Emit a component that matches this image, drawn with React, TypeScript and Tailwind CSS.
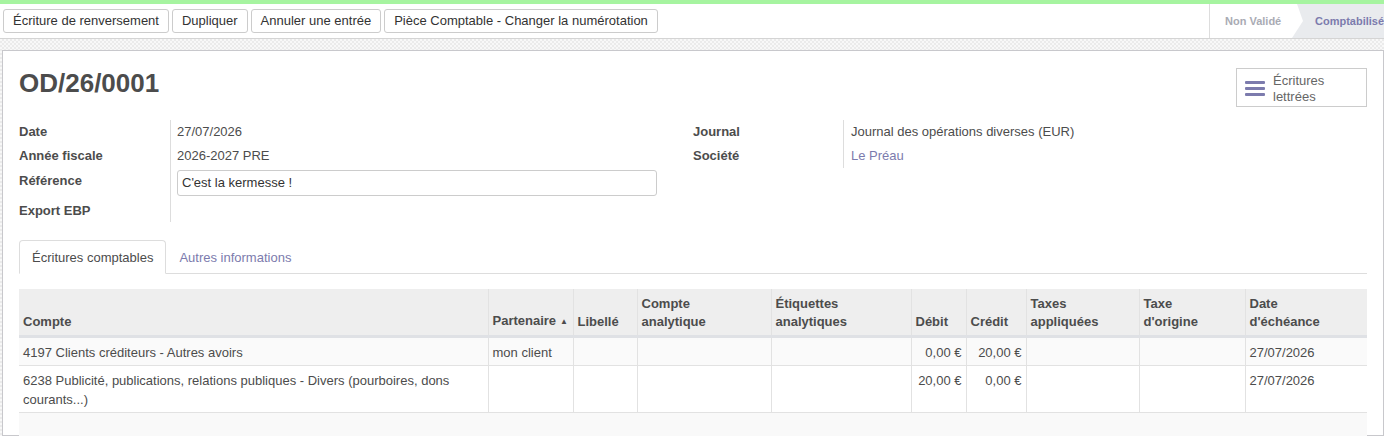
import React from "react";

const columns = [
  { key: "compte", label: ["", "Compte"], width: "w-[469px]" },
  { key: "partenaire", label: ["", "Partenaire"], width: "w-[85px]", sorted: true },
  { key: "libelle", label: ["", "Libellé"], width: "w-[64px]" },
  { key: "analytique", label: ["Compte", "analytique"], width: "w-[134px]" },
  { key: "etiquettes", label: ["Étiquettes", "analytiques"], width: "w-[140px]" },
  { key: "debit", label: ["", "Débit"], width: "w-[55px]", right: true },
  { key: "credit", label: ["", "Crédit"], width: "w-[60px]", right: true },
  { key: "taxes", label: ["Taxes", "appliquées"], width: "w-[113px]" },
  { key: "origine", label: ["Taxe", "d'origine"], width: "w-[106px]" },
  { key: "echeance", label: ["Date", "d'échéance"], width: "w-[122px]" },
];

const lines: Record<string, string>[] = [
  {
    compte: "4197 Clients créditeurs - Autres avoirs",
    partenaire: "mon client",
    debit: "0,00 €",
    credit: "20,00 €",
    echeance: "27/07/2026",
  },
  {
    compte: "6238 Publicité, publications, relations publiques - Divers (pourboires, dons courants...)",
    partenaire: "",
    debit: "20,00 €",
    credit: "0,00 €",
    echeance: "27/07/2026",
  },
];

function ActionButton({ children }: { children: React.ReactNode }) {
  return (
    <button
      type="button"
      className="h-[24px] rounded-[3px] border border-[#cccccc] bg-white px-[9px] text-[13px] text-[#333333]"
    >
      {children}
    </button>
  );
}

function FieldRow({ label, children }: { label: string; children?: React.ReactNode }) {
  return (
    <div className="flex h-[24px]">
      <div className="flex w-[151px] items-center font-bold text-[#4c4c4c]">{label}</div>
      <div className="flex flex-1 items-center border-l border-[#dddddd] pl-[6px]">{children}</div>
    </div>
  );
}

export default function App() {
  return (
    <div className="h-[436px] w-[1384px] overflow-hidden bg-white font-['Liberation_Sans',Arial,sans-serif] text-[13px] text-[#4c4c4c]">
      <div className="h-[4px] bg-[#a6f4a0]" />

      {/* control panel */}
      <div className="flex h-[35px] items-stretch border-b border-[#d4d4d4] bg-white">
        <div className="flex flex-1 items-center gap-[3px] pl-[3px]">
          <ActionButton>Écriture de renversement</ActionButton>
          <ActionButton>Dupliquer</ActionButton>
          <ActionButton>Annuler une entrée</ActionButton>
          <ActionButton>Pièce Comptable - Changer la numérotation</ActionButton>
        </div>
        <div className="flex items-stretch border-l border-[#dddddd] text-[11px] font-bold">
          <div className="flex w-[82px] items-center pl-[15px] text-[#a9abb4]">Non Validé</div>
          <div className="relative flex w-[92px] items-center bg-[#e9ebee] pl-[23px] text-[#7c7bad]">
            <svg className="absolute left-0 top-0 h-full w-[11px]" viewBox="0 0 11 34" preserveAspectRatio="none">
              <polygon points="0,0 5,0 11,17 0,34" fill="#ffffff" />
            </svg>
            <span className="whitespace-nowrap">Comptabilisé</span>
          </div>
        </div>
      </div>

      {/* form background */}
      <div className="h-[397px] bg-[repeating-conic-gradient(#ebebeb_0_25%,#f8f8f8_0_50%)] bg-[length:4px_4px] pl-[2px] pt-[11px]">
        <div className="h-full border border-[#c8c8cc] bg-white px-4 pt-[17px]">
          <div className="flex items-start justify-between">
            <h1 className="text-[26px] font-bold leading-[30px] text-[#4c4c4c]">OD/26/0001</h1>
            <div className="flex h-[39px] w-[131px] items-center gap-[8px] border border-[#cccccc] pl-[8px] text-[#666666]">
              <svg width="20" height="18" viewBox="0 0 20 18">
                <rect x="0" y="2" width="20" height="3" rx="1" fill="#7c7bad" />
                <rect x="0" y="8" width="20" height="3" rx="1" fill="#7c7bad" />
                <rect x="0" y="14" width="20" height="3" rx="1" fill="#7c7bad" />
              </svg>
              <div className="pt-[2px] leading-[16px]">
                Écritures
                <br />
                lettrées
              </div>
            </div>
          </div>

          <div className="mt-[13px] flex">
            <div className="w-[674px]">
              <FieldRow label="Date">27/07/2026</FieldRow>
              <FieldRow label="Année fiscale">2026-2027 PRE</FieldRow>
              <div className="flex h-[30px]">
                <div className="w-[151px] pt-[3px] font-bold">Référence</div>
                <div className="flex flex-1 items-center border-l border-[#dddddd] pl-[6px]">
                  <div className="flex h-[26px] w-[480px] items-center rounded-[3px] border border-[#cccccc] px-[4px] text-[#333333]">
                    C'est la kermesse !
                  </div>
                </div>
              </div>
              <div className="flex h-[24px]">
                <div className="flex w-[151px] items-center pt-[2px] font-bold">Export EBP</div>
                <div className="flex-1 border-l border-[#dddddd]" />
              </div>
            </div>
            <div className="flex-1">
              <div className="flex h-[24px]">
                <div className="flex w-[150px] items-center font-bold">Journal</div>
                <div className="flex flex-1 items-center border-l border-[#dddddd] pl-[7px]">
                  Journal des opérations diverses (EUR)
                </div>
              </div>
              <div className="flex h-[24px]">
                <div className="flex w-[150px] items-center font-bold">Société</div>
                <div className="flex flex-1 items-center border-l border-[#dddddd] pl-[7px] text-[#7c7bad]">
                  Le Préau
                </div>
              </div>
            </div>
          </div>

          {/* tabs */}
          <div className="mt-[18px] flex h-[34px] border-b border-[#dddddd]">
            <div className="-mb-px flex h-[34px] items-center rounded-t-[4px] border border-b-white border-[#dddddd] bg-white px-[12px] pt-[2px]">
              Écritures comptables
            </div>
            <div className="flex items-center px-[13px] pt-[2px] text-[#7c7bad]">Autres informations</div>
          </div>

          {/* lines */}
          <table className="mt-[15px] w-[1348px] table-fixed border-collapse">
            <thead>
              <tr className="bg-[#eeeeee]">
                {columns.map((c) => (
                  <th
                    key={c.key}
                    className={`${c.width} border-x border-b-[3px] border-x-[#e2e2e2] border-b-[#dfe1e5] px-[4px] pb-[4px] pt-[6px] text-left align-bottom font-bold leading-[18px] first:border-l-0 last:border-r-0`}
                  >
                    {c.label[0] && <div>{c.label[0]}</div>}
                    <div className="whitespace-nowrap">
                      {c.label[1]}
                      {c.sorted && <span className="ml-[4px] align-middle text-[8px]">▲</span>}
                    </div>
                  </th>
                ))}
              </tr>
            </thead>
            <tbody>
              {lines.map((l, i) => (
                <tr key={i} className={`border-b border-[#e2e2e2] ${i % 2 === 0 ? "bg-[#fafafa]" : "bg-white"}`}>
                  {columns.map((c) => (
                    <td
                      key={c.key}
                      className={`border-x border-[#e2e2e2] px-[4px] pb-[3px] pt-[5px] align-top leading-[19px] first:border-l-0 last:border-r-0 ${c.right ? "text-right" : ""}`}
                    >
                      {l[c.key] ?? ""}
                    </td>
                  ))}
                </tr>
              ))}
              <tr className="bg-[#f9f9f9]">
                <td colSpan={columns.length} className="h-[27px]" />
              </tr>
            </tbody>
          </table>
        </div>
      </div>
    </div>
  );
}
